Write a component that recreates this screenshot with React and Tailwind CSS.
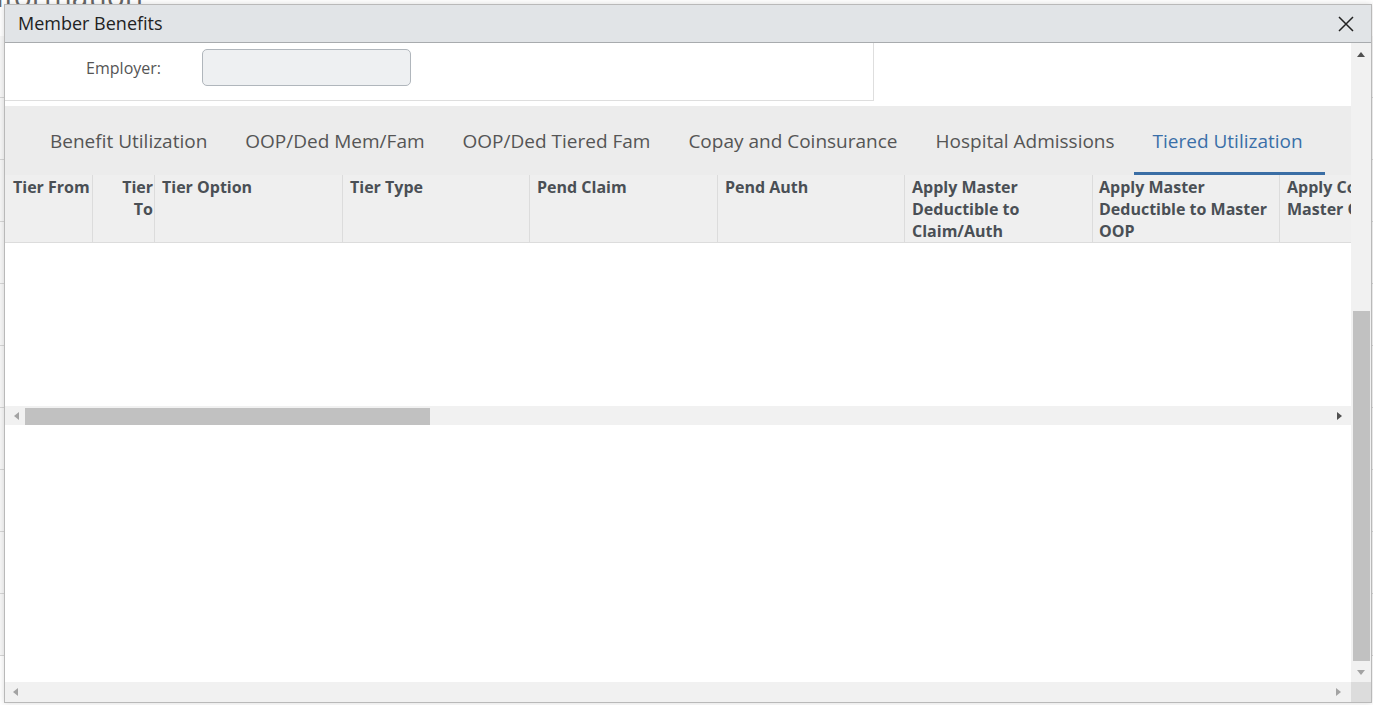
import React from "react";

const cols = [
  { w: "w-[87px]", label: "Tier From", cls: "pl-[8px]", first: true },
  { w: "w-[62px]", label: "Tier To", cls: "pr-[1px] text-right pl-[10px]" },
  { w: "w-[188px]", label: "Tier Option", cls: "pl-[7px]" },
  { w: "w-[187px]", label: "Tier Type", cls: "pl-[7px]" },
  { w: "w-[188px]", label: "Pend Claim", cls: "pl-[7px]" },
  { w: "w-[187px]", label: "Pend Auth", cls: "pl-[7px]" },
  { w: "w-[188px]", label: "Apply Master Deductible to Claim/Auth", cls: "pl-[7px] pr-[6px]" },
  { w: "w-[187px]", label: "Apply Master Deductible to Master OOP", cls: "pl-[6px] pr-[4px]" },
  { w: "w-[188px]", label: "Apply Copay to Master OOP", cls: "pl-[7px] pr-[6px]" },
];

const tabs = [
  "Benefit Utilization",
  "OOP/Ded Mem/Fam",
  "OOP/Ded Tiered Fam",
  "Copay and Coinsurance",
  "Hospital Admissions",
  "Tiered Utilization",
];

function Tri({ dir, color }) {
  const pts = {
    left: "5,0 5,8 0,4",
    right: "0,0 0,8 5,4",
    up: "0,5 8,5 4,0",
    down: "0,0 8,0 4,5",
  }[dir];
  const horiz = dir === "left" || dir === "right";
  return (
    <svg width={horiz ? 5 : 8} height={horiz ? 8 : 5} viewBox={horiz ? "0 0 5 8" : "0 0 8 5"}>
      <polygon points={pts} fill={color} />
    </svg>
  );
}

export default function App() {
  return (
    <div className="relative w-[1373px] h-[705px] overflow-hidden bg-white font-['Open_Sans',sans-serif]">
      {/* background page */}
      <div className="flex flex-col">
        <div className="-mt-[24px] -ml-[150px] text-[30px] leading-[40px] text-[#666] whitespace-nowrap">
          Member Information
        </div>
        <div className="mt-[20px] flex flex-col">
          {[0, 1, 2, 3, 4, 5, 6, 7, 8, 9].map((i) => (
            <div key={i} className="h-[62px] border-b border-[#d6d6d6] bg-[#f7f7f7]" />
          ))}
        </div>
      </div>

      {/* modal */}
      <div className="absolute left-[4px] top-[4px] w-[1368px] h-[699px] border border-[#b9b9b9] bg-white flex flex-col shadow-[0_0_6px_rgba(0,0,0,0.15)]">
        {/* header */}
        <div className="h-[38px] shrink-0 bg-[#e1e4e7] border-b border-[#a8abae] flex items-center justify-between pl-[13px] pr-[17px]">
          <span className="text-[18px] text-[#222] leading-none -mt-[2px]">Member Benefits</span>
          <svg width="16" height="16" viewBox="0 0 16 16">
            <path d="M1 1 L15 15 M15 1 L1 15" stroke="#222" strokeWidth="1.5" />
          </svg>
        </div>

        {/* body */}
        <div className="flex-1 min-h-0 flex">
          <div className="flex-1 min-w-0 flex flex-col overflow-hidden">
            {/* form */}
            <div className="w-[869px] h-[58px] shrink-0 border-r border-b border-[#dedede] flex items-start">
              <div className="w-[156px] h-[50px] flex items-center justify-end text-[16px] text-[#555]">
                Employer:
              </div>
              <div className="ml-[41px] mt-[6px] w-[209px] h-[37px] rounded-[5px] border border-[#b0b6bc] bg-[#eef0f2]" />
            </div>
            <div className="h-[5px] shrink-0" />
            {/* tabs */}
            <div className="h-[69px] shrink-0 bg-[#ececec] flex items-stretch pl-[26px]">
              {tabs.map((t, i) => {
                const active = i === tabs.length - 1;
                return (
                  <div
                    key={t}
                    className={
                      "px-[19px] pt-[5px] flex items-center whitespace-nowrap text-[19px] border-b-[3px] " +
                      (active ? "text-[#3a6fa8] border-[#3a6ea5] pr-[22px]" : "text-[#555] border-transparent")
                    }
                  >
                    {t}
                  </div>
                );
              })}
            </div>
            {/* table header */}
            <div className="h-[68px] shrink-0 bg-[#efefef] border-b border-[#dcdcdc] flex overflow-hidden">
              {cols.map((c) => (
                <div
                  key={c.label}
                  className={
                    c.w +
                    " shrink-0 pt-[1px] text-[16px] leading-[22px] font-bold text-[#4a4f55] overflow-hidden " +
                    (c.first ? "" : "border-l border-[#dcdcdc] ") +
                    c.cls
                  }
                >
                  {c.label}
                </div>
              ))}
            </div>
            {/* table body */}
            <div className="h-[163px] shrink-0 bg-white" />
            {/* inner horizontal scrollbar */}
            <div className="h-[19px] shrink-0 bg-[#f1f1f1] flex items-stretch">
              <div className="w-[20px] flex items-center justify-center pl-[2px]">
                <Tri dir="left" color="#a3a3a3" />
              </div>
              <div className="flex-1 flex items-end">
                <div className="w-[405px] h-[17px] bg-[#c1c1c1]" />
              </div>
              <div className="w-[20px] flex items-center justify-center pr-[4px]">
                <Tri dir="right" color="#505050" />
              </div>
            </div>
            <div className="flex-1 bg-white" />
          </div>
          {/* vertical scrollbar */}
          <div className="w-[20px] shrink-0 bg-[#f1f1f1] flex flex-col items-stretch">
            <div className="h-[20px] flex items-center justify-center pt-[2px]">
              <Tri dir="up" color="#505050" />
            </div>
            <div className="flex-1 flex flex-col justify-end px-[2px] pr-[1px] pb-[2px]">
              <div className="h-[350px] bg-[#c1c1c1]" />
            </div>
            <div className="h-[19px] flex items-center justify-center">
              <Tri dir="down" color="#a3a3a3" />
            </div>
          </div>
        </div>

        {/* bottom horizontal scrollbar */}
        <div className="h-[20px] shrink-0 flex">
          <div className="flex-1 bg-[#f1f1f1] flex items-center justify-between pl-[8px] pr-[10px]">
            <Tri dir="left" color="#a3a3a3" />
            <Tri dir="right" color="#a3a3a3" />
          </div>
          <div className="w-[20px] bg-[#dcdcdc]" />
        </div>
      </div>
    </div>
  );
}
